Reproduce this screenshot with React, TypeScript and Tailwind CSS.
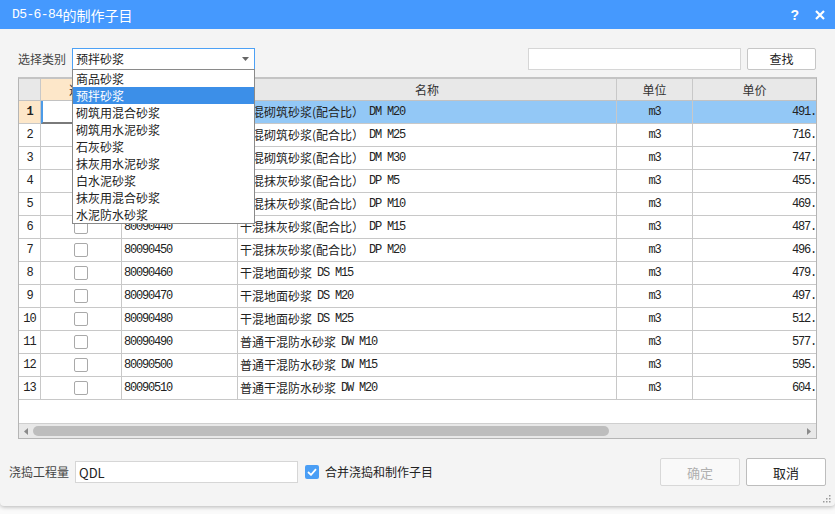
import React from 'react';

type Row = { n: number; code: string; cn: string; en: string; price: string };

const rows: Row[] = [
  { n: 1, code: '80090390', cn: '干混砌筑砂浆(配合比）', en: 'DM M20', price: '491.' },
  { n: 2, code: '80090400', cn: '干混砌筑砂浆(配合比）', en: 'DM M25', price: '716.' },
  { n: 3, code: '80090410', cn: '干混砌筑砂浆(配合比）', en: 'DM M30', price: '747.' },
  { n: 4, code: '80090420', cn: '干混抹灰砂浆(配合比）', en: 'DP M5', price: '455.' },
  { n: 5, code: '80090430', cn: '干混抹灰砂浆(配合比）', en: 'DP M10', price: '469.' },
  { n: 6, code: '80090440', cn: '干混抹灰砂浆(配合比）', en: 'DP M15', price: '487.' },
  { n: 7, code: '80090450', cn: '干混抹灰砂浆(配合比）', en: 'DP M20', price: '496.' },
  { n: 8, code: '80090460', cn: '干混地面砂浆', en: 'DS M15', price: '479.' },
  { n: 9, code: '80090470', cn: '干混地面砂浆', en: 'DS M20', price: '497.' },
  { n: 10, code: '80090480', cn: '干混地面砂浆', en: 'DS M25', price: '512.' },
  { n: 11, code: '80090490', cn: '普通干混防水砂浆', en: 'DW M10', price: '577.' },
  { n: 12, code: '80090500', cn: '普通干混防水砂浆', en: 'DW M15', price: '595.' },
  { n: 13, code: '80090510', cn: '普通干混防水砂浆', en: 'DW M20', price: '604.' },
];

const options = ['商品砂浆', '预拌砂浆', '砌筑用混合砂浆', '砌筑用水泥砂浆', '石灰砂浆', '抹灰用水泥砂浆', '白水泥砂浆', '抹灰用混合砂浆', '水泥防水砂浆'];

function Check() {
  return <div className="w-[14px] h-[14px] rounded-[2px] border border-[#a9a9a9] bg-white" />;
}

export default function App() {
  return (
    <div className="relative w-[835px] h-[514px] bg-[#fafafa] overflow-hidden font-['Noto_Sans_CJK_SC','Noto_Sans',sans-serif] text-[#333]">
      <div className="relative w-[835px] h-[506px] bg-[#f4f4f4] rounded-b-[4px] shadow-[0_1px_4px_rgba(0,0,0,0.28)] flex flex-col">
        {/* Title bar */}
        <div className="h-[29px] bg-[#4599fe] flex items-center pl-[12px] pr-[10px] text-white shrink-0">
          <span className="flex items-center leading-none">
            <span className="font-['Liberation_Mono',monospace] text-[13px] tracking-[-0.6px]">D5-6-84</span>
            <span className="text-[14px]">的制作子目</span>
          </span>
          <div className="ml-auto flex items-center gap-[16px]">
            <span className="font-['Liberation_Sans',sans-serif] font-bold text-[14px] leading-none">?</span>
            <svg width="10" height="10" viewBox="0 0 10 10">
              <path d="M1 1 L9 9 M9 1 L1 9" stroke="white" strokeWidth="2.2" />
            </svg>
          </div>
        </div>

        {/* Top controls */}
        <div className="flex items-center h-[22px] mt-[19px] pl-[18px] pr-[19px] shrink-0">
          <span className="text-[12px] leading-none text-[#444]">选择类别</span>
          <div className="relative ml-[6px] w-[183px] h-[22px] z-10">
            <div className="w-full h-full bg-white border border-[#4da1f5] flex items-center pl-[3px] pr-[5px]">
              <span className="text-[12px] leading-none text-[#222]">预拌砂浆</span>
              <svg className="ml-auto" width="7" height="4" viewBox="0 0 7 4">
                <path d="M0 0 L7 0 L3.5 4 Z" fill="#666" />
              </svg>
            </div>
            <div className="absolute left-0 top-[21px] w-[183px] bg-white border border-[#8a8a8a] flex flex-col">
              {options.map((o) => (
                <div
                  key={o}
                  className={o === '预拌砂浆' ? 'h-[17px] flex items-center pl-[3px] text-[12px] leading-none bg-[#3c8fe8] text-white' : 'h-[17px] flex items-center pl-[3px] text-[12px] leading-none text-[#222]'}
                >
                  {o}
                </div>
              ))}
            </div>
          </div>
          <div className="ml-auto w-[213px] h-[22px] bg-white border border-[#d6d6d6]" />
          <button className="ml-[6px] w-[69px] h-[22px] bg-white border border-[#c6c6c6] rounded-[2px] text-[12px] leading-none text-[#222] flex items-center justify-center">
            查找
          </button>
        </div>

        {/* Table */}
        <div className="mt-[7px] ml-[18px] w-[799px] h-[362px] border border-[#b5b5b5] border-t-2 border-t-[#c4c4c4] bg-white flex flex-col shrink-0">
          {/* Header */}
          <div className="flex h-[22px] bg-[#e8e8e8] border-b border-[#c2c2c2] text-[12px] leading-none text-[#333] shrink-0">
            <div className="w-[22px] border-r border-[#c8c8c8]" />
            <div className="w-[81px] border-r border-[#c8c8c8] bg-[#fde7c9] flex items-center justify-center">选择</div>
            <div className="w-[116px] border-r border-[#c8c8c8] flex items-center justify-center">编码</div>
            <div className="w-[379px] border-r border-[#c8c8c8] flex items-center justify-center">名称</div>
            <div className="w-[76px] border-r border-[#c8c8c8] flex items-center justify-center">单位</div>
            <div className="w-[123px] flex items-center justify-center">单价</div>
          </div>
          {/* Rows */}
          {rows.map((r) => {
            const sel = r.n === 1;
            return (
              <div key={r.n} className="flex h-[23px] border-b border-[#c8c8c8] text-[#222] shrink-0">
                <div className={sel ? 'w-[22px] border-r border-[#c8c8c8] bg-[#fde7c9] flex items-center justify-center font-["Liberation_Mono",monospace] font-bold text-[12px] tracking-[-1px]' : 'w-[22px] border-r border-[#c8c8c8] bg-white flex items-center justify-center font-["Liberation_Mono",monospace] text-[12px] tracking-[-1px]'}>
                  {r.n}
                </div>
                <div className={sel ? 'w-[81px] border-r border-[#c8c8c8] border-l-2 border-l-[#4c9be8] border-b-2 border-b-[#7a7a7a] -mb-px flex items-center justify-center' : 'w-[81px] border-r border-[#c8c8c8] flex items-center justify-center'}>
                  <Check />
                </div>
                <div className={sel ? 'w-[116px] border-r border-[#c8c8c8] bg-[#93c8f6] flex items-center pl-[2px] font-["Liberation_Mono",monospace] text-[12px] tracking-[-1.2px]' : 'w-[116px] border-r border-[#c8c8c8] flex items-center pl-[2px] font-["Liberation_Mono",monospace] text-[12px] tracking-[-1.2px]'}>
                  {r.code}
                </div>
                <div className={sel ? 'w-[379px] border-r border-[#c8c8c8] bg-[#93c8f6] flex items-center pl-[2px] whitespace-nowrap' : 'w-[379px] border-r border-[#c8c8c8] flex items-center pl-[2px] whitespace-nowrap'}>
                  <span className="text-[12px] leading-none">{r.cn}</span>
                  <span className="ml-[5px] font-['Liberation_Mono',monospace] text-[12px] tracking-[-1.2px] leading-none">{r.en}</span>
                </div>
                <div className={sel ? 'w-[76px] border-r border-[#c8c8c8] bg-[#93c8f6] flex items-center justify-center font-["Liberation_Mono",monospace] text-[12px] tracking-[-1.2px]' : 'w-[76px] border-r border-[#c8c8c8] flex items-center justify-center font-["Liberation_Mono",monospace] text-[12px] tracking-[-1.2px]'}>
                  m3
                </div>
                <div className={sel ? 'w-[123px] bg-[#93c8f6] flex items-center justify-end font-["Liberation_Mono",monospace] text-[12px] tracking-[-1.2px]' : 'w-[123px] flex items-center justify-end font-["Liberation_Mono",monospace] text-[12px] tracking-[-1.2px]'}>
                  {r.price}
                </div>
              </div>
            );
          })}
          <div className="flex-1" />
          {/* Horizontal scrollbar */}
          <div className="h-[15px] bg-[#e8e8e8] border-t border-[#cfcfcf] flex items-center shrink-0">
            <div className="w-[14px] flex items-center justify-center">
              <svg width="4" height="7" viewBox="0 0 4 7"><path d="M4 0 L0 3.5 L4 7 Z" fill="#8a8a8a" /></svg>
            </div>
            <div className="w-[576px] h-[10px] rounded-full bg-[#bdbdbd]" />
            <div className="ml-auto w-[14px] flex items-center justify-center">
              <svg width="4" height="7" viewBox="0 0 4 7"><path d="M0 0 L4 3.5 L0 7 Z" fill="#8a8a8a" /></svg>
            </div>
          </div>
        </div>

        {/* Bottom controls */}
        <div className="flex items-center h-[28px] mt-[19px] pl-[9px] pr-[9px] shrink-0">
          <span className="text-[12px] leading-none text-[#444]">浇捣工程量</span>
          <div className="ml-[6px] w-[223px] h-[22px] bg-white border border-[#d6d6d6] flex items-center pl-[3px]">
            <span className="text-[13px] leading-none text-[#222]">QDL</span>
          </div>
          <div className="ml-[7px] w-[14px] h-[14px] rounded-[2px] bg-[#4a9ef5] flex items-center justify-center">
            <svg width="10" height="8" viewBox="0 0 10 8">
              <path d="M1 4 L4 6.8 L9 1.2" stroke="white" strokeWidth="1.8" fill="none" />
            </svg>
          </div>
          <span className="ml-[6px] text-[12px] leading-none text-[#222]">合并浇捣和制作子目</span>
          <button className="ml-auto w-[80px] h-[28px] bg-[#f9f9f9] border border-[#d8d8d8] rounded-[2px] text-[13px] leading-none text-[#b0b0b0] flex items-center justify-center">
            确定
          </button>
          <button className="ml-[6px] w-[80px] h-[28px] bg-white border border-[#bdbdbd] rounded-[2px] text-[13px] leading-none text-[#222] flex items-center justify-center">
            取消
          </button>
        </div>

        {/* Resize grip */}
        <svg className="absolute right-[4px] bottom-[3px]" width="8" height="8" viewBox="0 0 8 8">
          <rect x="6" y="0" width="1.5" height="1.5" fill="#9a9a9a" />
          <rect x="3" y="3" width="1.5" height="1.5" fill="#9a9a9a" />
          <rect x="6" y="3" width="1.5" height="1.5" fill="#9a9a9a" />
          <rect x="0" y="6" width="1.5" height="1.5" fill="#9a9a9a" />
          <rect x="3" y="6" width="1.5" height="1.5" fill="#9a9a9a" />
          <rect x="6" y="6" width="1.5" height="1.5" fill="#9a9a9a" />
        </svg>
      </div>
    </div>
  );
}
